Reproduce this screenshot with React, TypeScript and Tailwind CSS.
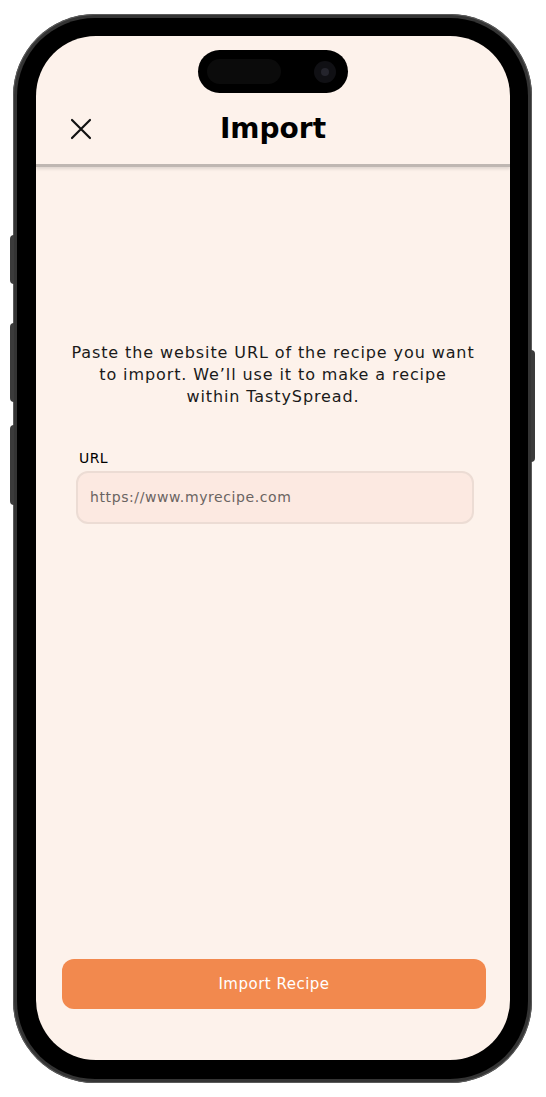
export default function App() {
  const font = { fontFamily: '"DejaVu Sans", "Noto Sans", sans-serif' };
  return (
    <div className="w-[546px] h-[1097px] bg-white pt-[14px] pl-[13px]" style={font}>
      <div className="relative w-[519px] h-[1069px]">
        {/* side buttons */}
        <div className="absolute left-[-3px] top-[221px] w-[4px] h-[49px] rounded-l-sm bg-[#3b3b3b]" />
        <div className="absolute left-[-3px] top-[309px] w-[4px] h-[79px] rounded-l-sm bg-[#3b3b3b]" />
        <div className="absolute left-[-3px] top-[411px] w-[4px] h-[80px] rounded-l-sm bg-[#3b3b3b]" />
        <div className="absolute right-[-3px] top-[336px] w-[4px] h-[112px] rounded-r-sm bg-[#3b3b3b]" />

        <div className="w-full h-full rounded-[82px] bg-[#343434] p-[4px] shadow-[inset_0_0_0_1px_#5a5a5a]">
          <div className="w-full h-full rounded-[78px] bg-black pt-[18px] pl-[19px] pr-[18px] pb-[19px]">
            <div className="relative w-full h-full rounded-[60px] bg-[#fdf2eb] overflow-hidden flex flex-col">
              {/* dynamic island */}
              <div className="absolute left-[162px] top-[14px] w-[150px] h-[43px] rounded-full bg-black flex items-center justify-between px-[9px]">
                <div className="w-[74px] h-[25px] rounded-full bg-[#0b0b0b]" />
                <div className="w-[22px] h-[22px] mr-[3px] rounded-full bg-[#101014] flex items-center justify-center">
                  <div className="w-[8px] h-[8px] rounded-full bg-[#24242c]" />
                </div>
              </div>

              <header className="h-[131px] shrink-0 border-b-[3px] border-[#bfb7b2] shadow-[0_2px_3px_rgba(0,0,0,0.12)] grid grid-cols-[1fr_auto_1fr] items-center pt-[57px] px-[34px]">
                <button className="w-[22px] h-[22px] flex items-center justify-center">
                  <svg width="22" height="22" viewBox="0 0 22 22" fill="none" stroke="#111" strokeWidth="2.2" strokeLinecap="round">
                    <path d="M2 2L20 20M20 2L2 20" />
                  </svg>
                </button>
                <h1 className="text-center text-[28px] leading-[34px] font-bold text-black">Import</h1>
                <div />
              </header>

              <main className="flex-1 flex flex-col items-center pt-[175px]">
                <p className="w-[412px] text-center text-[16px] leading-[22px] tracking-[0.9px] text-[#1a1a1a]">
                  Paste the website URL of the recipe you want to import. We’ll use it to make a recipe
                  <br />
                  within TastySpread.
                </p>
                <div className="mt-[41px] w-[398px] ml-[4px]">
                  <label className="block pl-[3px] text-[14px] leading-[18px] tracking-[0.4px] text-black">URL</label>
                  <div className="mt-[4px] h-[53px] rounded-[12px] bg-[#fce9e1] border-2 border-[#ecdcd4] flex items-center px-[12px]">
                    <span className="text-[14px] tracking-[0.6px] text-[#6a6462]">https://www.myrecipe.com</span>
                  </div>
                </div>
              </main>

              <div className="pl-[26px] pr-[24px] pb-[51px]">
                <button className="w-full h-[50px] rounded-[12px] bg-[#f2894e] text-white text-[15px] tracking-[0.5px]">
                  Import Recipe
                </button>
              </div>
            </div>
          </div>
        </div>
      </div>
    </div>
  );
}
